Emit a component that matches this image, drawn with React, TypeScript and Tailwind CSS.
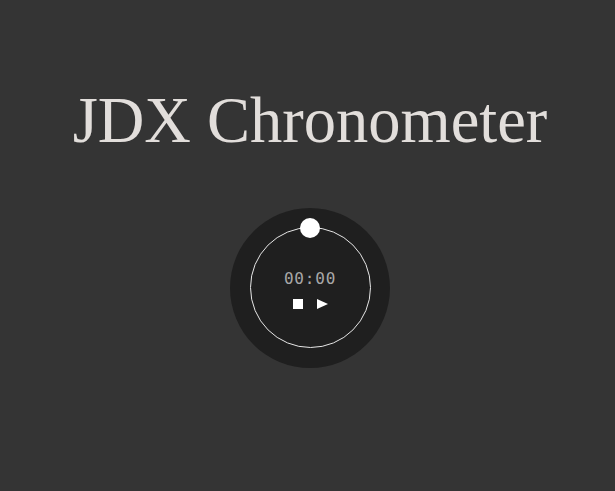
export default function App() {
  return (
    <div className="min-h-screen w-full bg-[#343434] flex flex-col items-center pl-[5px]">
      {/* TITLE */}
      <h1
        className="pt-[73px] text-[64.5px] leading-normal text-[#e2dedb] font-normal"
        style={{ fontFamily: '"Liberation Serif", "Times New Roman", serif' }}
      >
        JDX Chronometer
      </h1>

      {/* CHRONO DIAL */}
      <div className="mt-[38px] w-40 h-40 rounded-full bg-[#1f1f1f] flex items-center justify-center">
        <div className="relative w-[121px] h-[121px] rounded-full border border-[#e6e6e6] flex flex-col items-center justify-center">
          <div className="absolute -top-[10px] left-1/2 -translate-x-1/2 w-5 h-5 rounded-full bg-white" />
          <span
            className="mt-[4px] text-[16px] leading-4 text-[#a8a8a8] tracking-[0.8px] font-light"
            style={{ fontFamily: '"DejaVu Sans Mono", "Liberation Mono", monospace' }}
          >
            00:00
          </span>
          <div className="mt-[12px] flex items-center gap-[14px]">
            <button className="w-[10px] h-[10px] bg-white" aria-label="stop" />
            <button aria-label="play" className="w-[11px] h-[10px] flex items-center">
              <svg width="11" height="10" viewBox="0 0 11 10">
                <polygon points="0,0 11,5 0,10" fill="#ffffff" />
              </svg>
            </button>
          </div>
        </div>
      </div>
    </div>
  );
}
